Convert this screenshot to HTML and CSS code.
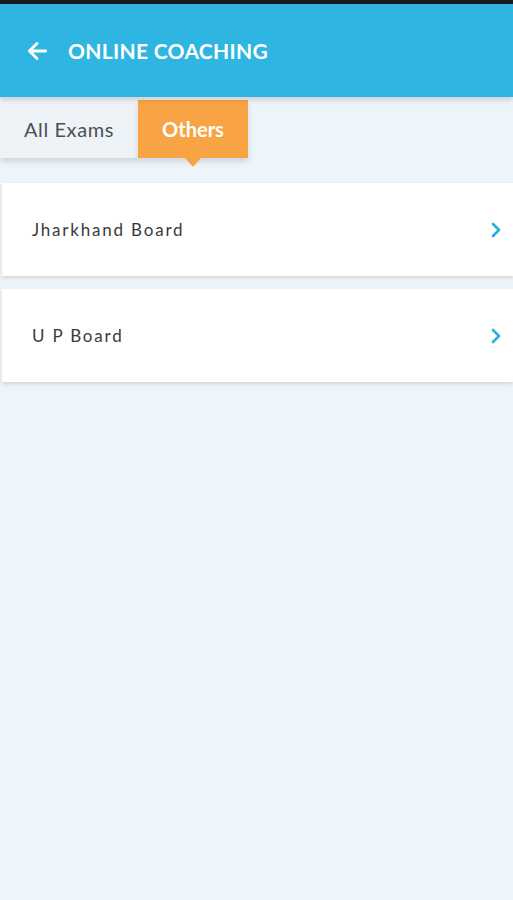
FILE: index.html
```html
<!DOCTYPE html>
<html lang="en">
<head>
    <meta charset="UTF-8">
    <meta name="viewport" content="width=device-width, initial-scale=1.0">
    <title>Online Coaching</title>
    <link rel="stylesheet" href="styles.css">
</head>
<body>
    <div class="status-bar"></div>
    <header class="app-bar">
        <svg class="back" width="26" height="26" viewBox="0 0 24 24">
            <path d="M20 12H5M12 5l-7 7 7 7" fill="none" stroke="#fff" stroke-width="2.6" stroke-linecap="round" stroke-linejoin="round"/>
        </svg>
        <h1>ONLINE COACHING</h1>
    </header>

    <nav class="tabs">
        <div class="tab">All Exams</div>
        <div class="tab active">Others</div>
    </nav>

    <div class="list">
        <div class="card">
            <span>Jharkhand Board</span>
            <svg class="chev" width="12" height="18" viewBox="0 0 12 18">
                <path d="M3 3l6 6-6 6" fill="none" stroke="#2aaee0" stroke-width="2.6" stroke-linecap="round" stroke-linejoin="round"/>
            </svg>
        </div>
        <div class="card">
            <span>U P Board</span>
            <svg class="chev" width="12" height="18" viewBox="0 0 12 18">
                <path d="M3 3l6 6-6 6" fill="none" stroke="#2aaee0" stroke-width="2.6" stroke-linecap="round" stroke-linejoin="round"/>
            </svg>
        </div>
    </div>
</body>
</html>
```

FILE: styles.css
```css
body {
    margin: 0;
    padding: 0;
    font-family: Lato, "Open Sans", sans-serif;
    background-color: #edf4fa;
    min-height: 900px;
}
.status-bar {
    height: 4px;
    background-color: #1a1a1a;
}
.app-bar {
    height: 93px;
    background-color: #2fb5e1;
    display: flex;
    align-items: center;
    padding-left: 24px;
    box-shadow: 0 3px 5px rgba(0, 0, 0, 0.15);
    position: relative;
    z-index: 2;
}
.app-bar h1 {
    margin: 0 0 0 18px;
    color: #fff;
    font-size: 21px;
    font-weight: 700;
    letter-spacing: 0.3px;
}
.back {
    display: block;
}
.tabs {
    display: flex;
    height: 58px;
    margin-top: 3px;
}
.tab {
    width: 138px;
    display: flex;
    align-items: center;
    justify-content: center;
    font-size: 20px;
    letter-spacing: 0.6px;
    color: #4a4f57;
    background-color: #eef3f7;
    box-shadow: 0 4px 6px rgba(0, 0, 0, 0.12);
}
.tab.active {
    width: 110px;
    background-color: #f9a444;
    color: #fff;
    font-weight: 700;
    letter-spacing: 0;
    position: relative;
}
.tab.active::after {
    content: "";
    position: absolute;
    left: 47px;
    bottom: -9px;
    border-left: 8px solid transparent;
    border-right: 8px solid transparent;
    border-top: 9px solid #f9a444;
}
.list {
    margin-top: 25px;
    padding-left: 2px;
    display: flex;
    flex-direction: column;
    gap: 13px;
}
.card {
    height: 93px;
    background-color: #fff;
    display: flex;
    align-items: center;
    justify-content: space-between;
    padding: 0 11px 0 30px;
    font-size: 17px;
    letter-spacing: 1.8px;
    color: #3a3a3a;
    box-shadow: 0 2px 4px rgba(0, 0, 0, 0.12);
}
.chev {
    display: block;
}
```
